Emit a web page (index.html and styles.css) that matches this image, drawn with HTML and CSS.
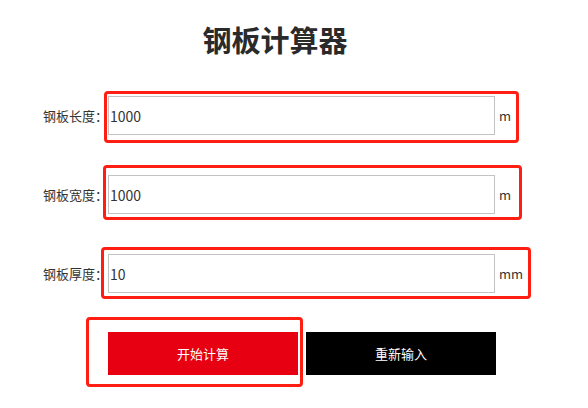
FILE: index.html
```html
<!DOCTYPE html>
<html lang="zh">
<head>
<meta charset="utf-8">
<title>钢板计算器</title>
<link rel="stylesheet" href="styles.css">
</head>
<body>
<div class="page">
  <h1 class="title">钢板计算器</h1>
  <div class="form">
    <div class="row">
      <label class="label">钢板长度：</label>
      <input class="field" type="text" value="1000">
      <span class="unit">m</span>
    </div>
    <div class="row">
      <label class="label">钢板宽度：</label>
      <input class="field" type="text" value="1000">
      <span class="unit">m</span>
    </div>
    <div class="row">
      <label class="label">钢板厚度：</label>
      <input class="field" type="text" value="10">
      <span class="unit">mm</span>
    </div>
    <div class="actions">
      <button class="btn btn-calc" type="button">开始计算</button>
      <button class="btn btn-reset" type="button">重新输入</button>
    </div>
  </div>
  <div class="mark mark-1"></div>
  <div class="mark mark-2"></div>
  <div class="mark mark-3"></div>
  <div class="mark mark-4"></div>
</div>
</body>
</html>
```
FILE: styles.css
```css
html, body {
  margin: 0;
  padding: 0;
  background: #fff;
}
.page {
  position: relative;
  width: 588px;
  height: 408px;
  font-family: "Noto Sans CJK SC", "Noto Sans", sans-serif;
  color: #333;
}
.title {
  margin: 0;
  padding-top: 19px;
  width: 550px;
  height: 40px;
  line-height: 40px;
  text-align: center;
  font-size: 29px;
  font-weight: bold;
  color: #2a2a2a;
}
.form {
  padding-top: 37px;
}
.row {
  display: flex;
  align-items: center;
  height: 39px;
  margin-bottom: 40px;
}
.label {
  width: 108px;
  text-align: right;
  font-size: 13px;
  color: #333;
}
.field {
  box-sizing: border-box;
  width: 387px;
  height: 39px;
  margin: 0;
  padding: 0 1px;
  border: 1px solid #c3c3c3;
  font-family: "Noto Sans CJK SC", "Noto Sans", sans-serif;
  font-size: 14px;
  color: #333;
  outline: none;
}
.unit {
  margin-left: 4px;
  font-size: 13px;
  color: #333;
}
.actions {
  display: flex;
  gap: 8px;
  padding-left: 108px;
  margin-top: -1px;
}
.btn {
  width: 190px;
  height: 43px;
  border: none;
  margin: 0;
  font-family: "Noto Sans CJK SC", sans-serif;
  font-size: 13px;
  color: #fff;
}
.btn-calc {
  background: #e60012;
}
.btn-reset {
  background: #000;
}
.mark {
  position: absolute;
  box-sizing: border-box;
  border: 3px solid #ff1e12;
  border-radius: 4px;
}
.mark-1 { left: 104px; top: 91px; width: 415px; height: 52px; }
.mark-2 { left: 103px; top: 165px; width: 419px; height: 55px; }
.mark-3 { left: 101px; top: 247px; width: 430px; height: 52px; }
.mark-4 { left: 86px; top: 317px; width: 217px; height: 70px; }
```
